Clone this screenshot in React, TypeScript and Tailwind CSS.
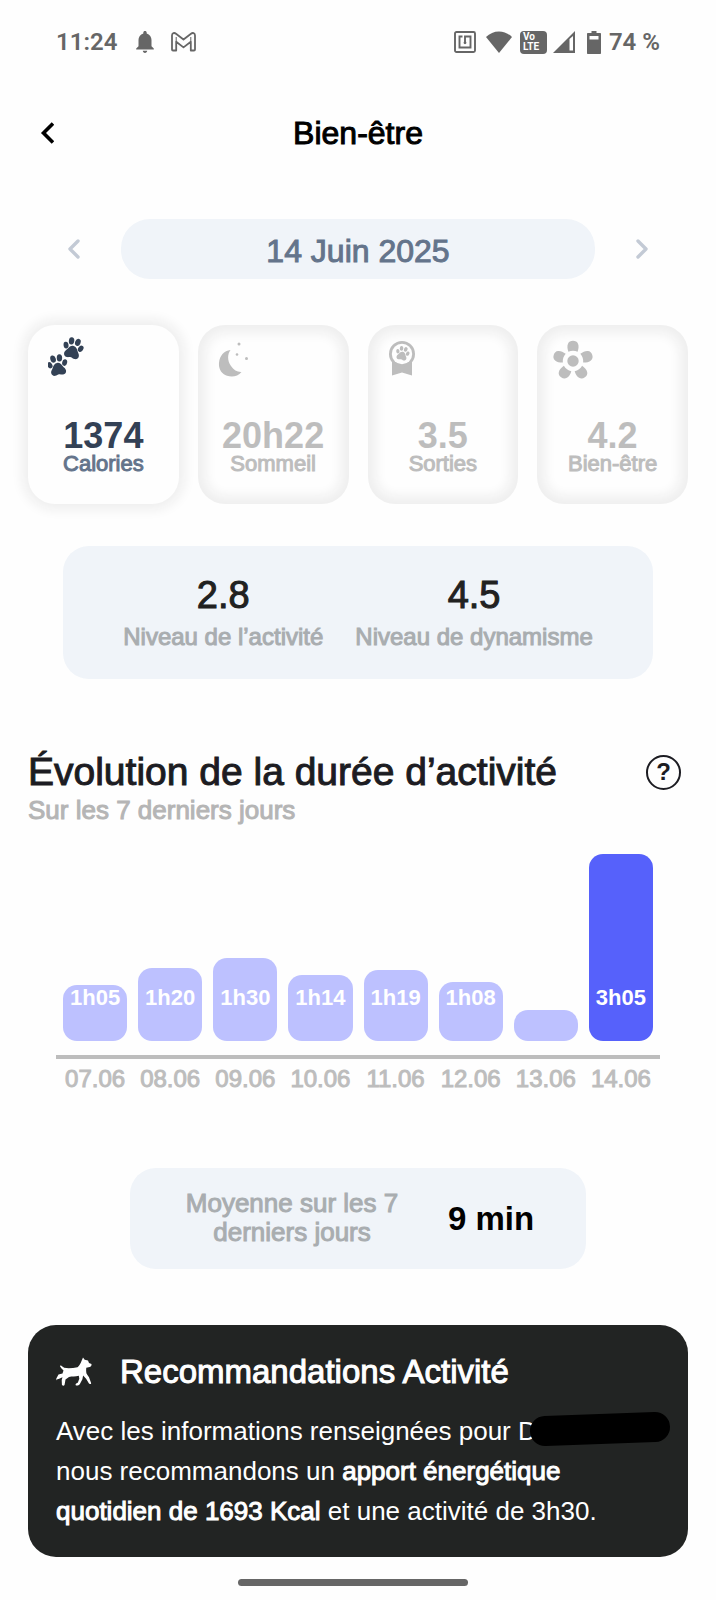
import React from 'react';

interface IconProps {
  className?: string;
}

interface Metric {
  label: string;
  value: string;
  icon: React.ReactNode;
  active?: boolean;
}

interface Day {
  date: string;
  height: number;
  duration?: string;
  active?: boolean;
}

const Paw: React.FC<{ transform?: string }> = ({ transform }) => (
  <g transform={transform}>
    <ellipse cx="-7" cy="-1.5" rx="2.3" ry="3.1" transform="rotate(-22 -7 -1.5)" />
    <ellipse cx="-3" cy="-6.6" rx="2.5" ry="3.4" transform="rotate(-8 -3 -6.6)" />
    <ellipse cx="3" cy="-6.6" rx="2.5" ry="3.4" transform="rotate(8 3 -6.6)" />
    <ellipse cx="7" cy="-1.5" rx="2.3" ry="3.1" transform="rotate(22 7 -1.5)" />
    <path d="M0-2.4c2.4 0 3.6 1.7 4.6 3.6 1 1.8 2.4 2.6 2.4 4.7 0 2-1.5 3.2-3.3 3.2C2.300 9.100 1.200 8.300 0 8.300s-2.300.8-3.700.8C-5.500 9.100-7 7.900-7 5.900c0-2.100 1.400-2.900 2.400-4.700C-3.600-.7-2.400-2.400 0-2.400z" />
  </g>
);

const PawsIcon: React.FC<IconProps> = ({ className }) => (
  <svg viewBox="0 0 36 40" className={className} fill="currentColor">
    <Paw transform="translate(25 11.5) rotate(14) scale(1.08)" />
    <Paw transform="translate(9.500 28.500) rotate(-10) scale(1.08)" />
  </svg>
);

const MoonIcon: React.FC<IconProps> = ({ className }) => (
  <svg viewBox="0 0 32 36" className={className} fill="currentColor">
    <path d="M12.500 9C9 14 9.500 20 13 25c2.600 4 6.400 6.300 10.500 6C20 35.500 14 36.500 9 34.800 3.500 33 .5 27.800 1 22 1.500 15 6 9.500 12.500 9z" />
    <circle cx="21" cy="3" r="1.500" />
    <circle cx="19" cy="13.500" r="1.300" />
    <circle cx="28.500" cy="17.500" r="1.500" />
  </svg>
);

const BadgeIcon: React.FC<IconProps> = ({ className }) => (
  <svg viewBox="0 0 28 36" className={className} fill="currentColor">
    <path d="M4 21h20v14.500l-10-3-10 3z" />
    <circle cx="14" cy="14" r="13" />
    <circle cx="14" cy="14" r="10.200" fill="#fefefe" />
    <Paw transform="translate(14.500 13.500) rotate(14) scale(.72)" />
  </svg>
);

const FlowerIcon: React.FC<IconProps> = ({ className }) => (
  <svg viewBox="0 0 40 40" className={className} fill="currentColor">
    <circle cx="20" cy="21" r="5.700" />
    {[0, 72, 144, 216, 288].map((angle) => (
      <path
        key={angle}
        transform={`rotate(${angle} 20 21)`}
        d="M15.400 11.800C14.400 8.800 14 6 15 3.800 15.900 1.600 17.600.8 20 .8s4.100.8 5 3c1 2.200.6 5-.4 8-3-1.300-6.200-1.300-9.200 0z"
      />
    ))}
  </svg>
);

const DogIcon: React.FC<IconProps> = ({ className }) => (
  <svg viewBox="0 0 36 30" className={className} fill="currentColor">
    <path d="M27 .5l1.700 2.200 3.300.9 1 2.300 2.500 1.100c.2 2-1 3.100-3 3.200l-2.200.6c-.3 2.500-.2 4.400.3 6l2.400 3.500 2.100 5.600c.3 1.300-1.900 1.500-2.300.4l-2.700-4.600-3-3.200-.7 3.700-2.500 4.800c-1 1.500-3.900 2.200-4.300 1-.3-1 1-1.700 2.200-2.200l1.500-4-.5-3.100c-3.400.8-6.800.6-9.800 1.200l-3.500 2.600-.9 5.300c-.4 1.300-2.900 1-2.700-.4l-.2-4.400.8-2.800-3.300 1.500-3.600 1.200L1.900 23.200C.6 23.600-.2 22 .6 20.900l1.900-3.300 4-1.200 1-3-2.200-2.200L4 9.300c-.3-1 .9-1.200 1.600-.4l2.600 1.900c4.300.8 8.700.3 13.300-.6 1.900-1.500 3-3.700 3.900-6z" />
  </svg>
);

const Chevron: React.FC<IconProps & { d: string; width: number; cap?: 'round' | 'butt' }> = ({ className, d, width, cap }) => (
  <svg viewBox="0 0 14 22" className={className} fill="none" stroke="currentColor" strokeWidth={width} strokeLinecap={cap} strokeLinejoin={cap === 'round' ? 'round' : 'miter'}>
    <path d={d} />
  </svg>
);

const metrics: Metric[] = [
  { label: 'Calories', value: '1374', icon: <PawsIcon className="h-10 w-9" />, active: true },
  { label: 'Sommeil', value: '20h22', icon: <MoonIcon className="mt-1 h-9 w-8" /> },
  { label: 'Sorties', value: '3.5', icon: <BadgeIcon className="mt-[3px] h-9 w-7" /> },
  { label: 'Bien-être', value: '4.2', icon: <FlowerIcon className="mt-[3px] -ml-1 size-10" /> },
];

const days: Day[] = [
  { date: '07.06', height: 56, duration: '1h05' },
  { date: '08.06', height: 73, duration: '1h20' },
  { date: '09.06', height: 83, duration: '1h30' },
  { date: '10.06', height: 66, duration: '1h14' },
  { date: '11.06', height: 71, duration: '1h19' },
  { date: '12.06', height: 59, duration: '1h08' },
  { date: '13.06', height: 31 },
  { date: '14.06', height: 187, duration: '3h05', active: true },
];

const StatusBar = () => (
  <div className="flex h-6 items-center justify-between px-14 font-[Roboto] text-2xl font-semibold text-[#666]">
    <div className="flex items-center">
      <span>11:24</span>
      <svg viewBox="0 0 18 22" className="ml-[19px] h-[22px] w-[18px]" fill="currentColor">
        <path d="M9 0c1 0 1.700.7 1.700 1.700v.7C13.800 3.200 15.500 6 15.500 9v6.300L17.800 17.500v1H.2v-1l2.300-2.200V9c0-3 1.700-5.800 4.800-6.600v-.7C7.300.7 8 0 9 0zM6.800 19.700h4.400c0 1.200-1 2.200-2.200 2.200s-2.200-1-2.200-2.200z" />
      </svg>
      <svg viewBox="0 0 25 20" className="ml-[17px] h-5 w-[25px]" fill="none" stroke="currentColor" strokeWidth="1.800" strokeLinejoin="round">
        <path d="M1 3.500C1 1 3.300.4 5 1.700l7.500 5.800L20 1.700C21.700.4 24 1 24 3.500V17.500c0 .6-.4 1-1 1h-3.200V9.800l-7.300 5.600-7.300-5.600v8.700H2c-.6 0-1-.4-1-1z" />
        <path d="M5.200 5v4.800M19.800 5v4.800" strokeWidth="1" />
      </svg>
    </div>
    <div className="flex items-center">
      <svg viewBox="0 0 22 22" className="size-[22px]" fill="none" stroke="currentColor" strokeWidth="1.900">
        <rect x="1" y="1" width="20" height="20" rx="1.500" />
        <path d="M8.500 5.500h-3v11h11v-11H11v6" />
        <circle cx="11" cy="11.800" r="1.400" fill="currentColor" stroke="none" />
      </svg>
      <svg viewBox="0 0 26 22" className="ml-[10px] h-[22px] w-[26px]" fill="currentColor">
        <path d="M0 6C7-1.500 19-1.500 26 6L13 22z" />
      </svg>
      <div className="ml-2 flex h-[23px] w-[27px] flex-col justify-center rounded-sm bg-[#666] pl-[3px] text-[10px] leading-[10px] font-bold text-white">
        <span>Vo</span>
        <span>LTE</span>
      </div>
      <svg viewBox="0 0 22 22" className="ml-[6px] size-[22px]" fill="currentColor">
        <path fillRule="evenodd" d="M22 0v22H0zM16.500 8v11.500H20V5z" />
      </svg>
      <svg viewBox="0 0 14 23" className="ml-3 h-[23px] w-[14px]" fill="currentColor">
        <path fillRule="evenodd" d="M4.500 0h5v2H13c.6 0 1 .4 1 1v19c0 .6-.4 1-1 1H1c-.6 0-1-.4-1-1V3c0-.6.4-1 1-1h3.500zM2.500 5v3.500h9V5z" />
      </svg>
      <span className="ml-2 whitespace-nowrap">74 %</span>
    </div>
  </div>
);

const MetricCard: React.FC<Metric> = ({ label, value, icon, active }) => (
  <button
    className={`flex h-[179px] flex-col rounded-[27px] pt-3 pb-7 ${
      active
        ? 'text-[#334155] shadow-[0_0_12px_6px_#efefef]'
        : 'text-[#bdbdbd] shadow-[inset_0_0_12px_8px_#efefef]'
    }`}
  >
    <span className="ml-5 block">{icon}</span>
    <span className="mt-auto block w-full text-center text-4xl leading-8 font-bold">{value}</span>
    <span
      className={`block w-full text-center text-[22px] leading-6 [-webkit-text-stroke:1px] ${active ? 'text-[#64748b]' : ''}`}
    >
      {label}
    </span>
  </button>
);

const ActivityChart = () => (
  <div className="mx-7 mt-[29px]">
    <div className="grid grid-cols-8 items-end gap-[11px] px-[7px]">
      {days.map((day) => (
        <div
          key={day.date}
          className={`relative rounded-[14px] ${day.active ? 'bg-[#5661fb]' : 'bg-[#bdc1ff]'}`}
          style={{ height: day.height }}
        >
          {/* durations share one line whatever the bar height */}
          <span className="absolute inset-x-0 bottom-[31px] text-center text-[22px] leading-6 font-bold text-white">
            {day.duration}
          </span>
        </div>
      ))}
    </div>
    <div className="mt-[14px] h-1 bg-[#bdbdbd]" />
    <div className="mt-1 grid grid-cols-8 gap-[11px] px-[7px] text-2xl leading-8 text-[#bdbdbd] [-webkit-text-stroke:1px]">
      {days.map((day) => (
        <span key={day.date} className="flex justify-center">{day.date}</span>
      ))}
    </div>
  </div>
);

const App: React.FC = () => {
  return (
    <div className="min-h-screen bg-[#fefefe] pt-[30px] pb-[14px] font-['Liberation_Sans',Arial,sans-serif]">
      <StatusBar />

      <header className="mt-[59px] grid h-10 grid-cols-[1fr_auto_1fr] items-center px-10">
        <button aria-label="Retour" className="justify-self-start">
          <Chevron className="h-[22px] w-[14px]" d="M13 1.500L3.500 11l9.500 9.500" width={3.6} />
        </button>
        <h1 className="text-[32px] leading-10 text-black [-webkit-text-stroke:1px]">Bien-être</h1>
      </header>

      <main className="px-7">
        <div className="mt-[66px] flex items-center justify-between px-[39px]">
          <button aria-label="Jour précédent" className="text-[#c3cad5]">
            <Chevron className="h-[22px] w-[14px]" d="M11 3l-8 8 8 8" width={3.4} cap="round" />
          </button>
          <div className="mx-10 flex h-15 flex-1 items-center justify-center rounded-[29px] bg-[#f0f4f9] pt-1 text-[32px] text-[#64748b] [-webkit-text-stroke:1px]">
            14 Juin 2025
          </div>
          <button aria-label="Jour suivant" className="text-[#c3cad5]">
            <Chevron className="h-[22px] w-[14px]" d="M3 3l8 8-8 8" width={3.4} cap="round" />
          </button>
        </div>

        <div className="mt-[46px] grid grid-cols-4 gap-[19px]">
          {metrics.map((metric) => (
            <MetricCard key={metric.label} {...metric} />
          ))}
        </div>

        <section className="mx-[35px] mt-[42px] flex justify-center gap-8 rounded-[26px] bg-[#f0f4f9] pt-[29px] pb-[26px] text-center">
          <div>
            <p className="text-[38px] leading-10 text-[#212121] [-webkit-text-stroke:1px]">2.8</p>
            <p className="mt-[6px] text-2xl leading-8 text-[#a9adb0] [-webkit-text-stroke:1px]">Niveau de l’activité</p>
          </div>
          <div>
            <p className="text-[38px] leading-10 text-[#212121] [-webkit-text-stroke:1px]">4.5</p>
            <p className="mt-[6px] text-2xl leading-8 text-[#a9adb0] [-webkit-text-stroke:1px]">Niveau de dynamisme</p>
          </div>
        </section>

        <section className="mt-[69px]">
          <div className="flex items-center justify-between pr-[7px]">
            <h2 className="text-[39px] leading-12 text-[#1c1c22] [-webkit-text-stroke:1px]">
              Évolution de la durée d’activité
            </h2>
            <button aria-label="Aide" className="flex size-[35px] items-center justify-center rounded-full border-2 border-[#1c1c22] text-2xl font-bold text-[#1c1c22]">
              ?
            </button>
          </div>
          <p className="text-[26px] leading-[29px] text-[#b5b5b5] [-webkit-text-stroke:1px]">Sur les 7 derniers jours</p>
          <ActivityChart />
        </section>

        <section className="mx-auto mt-[73px] flex max-w-[456px] items-center gap-11 rounded-[26px] bg-[#f0f4f9] px-[50px] pt-[21px] pb-[22px]">
          <p className="w-56 text-center text-[26px] leading-[29px] text-[#a9adb0] [-webkit-text-stroke:1px]">
            Moyenne sur les 7 derniers jours
          </p>
          <p className="pt-[2px] text-[33px] leading-10 font-bold whitespace-nowrap text-black">9 min</p>
        </section>

        <section className="relative mt-14 rounded-[28px] bg-[#222423] px-7 pt-[27px] pb-[26px] text-white">
          <div className="flex items-center gap-7">
            <DogIcon className="h-[30px] w-9" />
            <h2 className="text-[33px] leading-10 [-webkit-text-stroke:1px]">Recommandations Activité</h2>
          </div>
          <p className="mt-[19px] text-[26px] leading-10">
            Avec les informations renseignées pour D
            <br />
            nous recommandons un <strong className="font-normal [-webkit-text-stroke:1px]">apport énergétique</strong>
            <br />
            <strong className="font-normal [-webkit-text-stroke:1px]">quotidien de 1693 Kcal</strong> et une activité de 3h30.
          </p>
          {/* hides the pet's name */}
          <svg viewBox="0 0 142 36" className="absolute top-[86px] right-[17px] h-9 w-[142px]">
            <path d="M16 20L126 16" stroke="#000" strokeWidth="30" strokeLinecap="round" />
          </svg>
        </section>
      </main>

      <div className="mt-[22px] flex justify-center pr-[10px]">
        <div className="h-[7px] w-[230px] rounded-full bg-[#666]" />
      </div>
    </div>
  );
};

export default App;
